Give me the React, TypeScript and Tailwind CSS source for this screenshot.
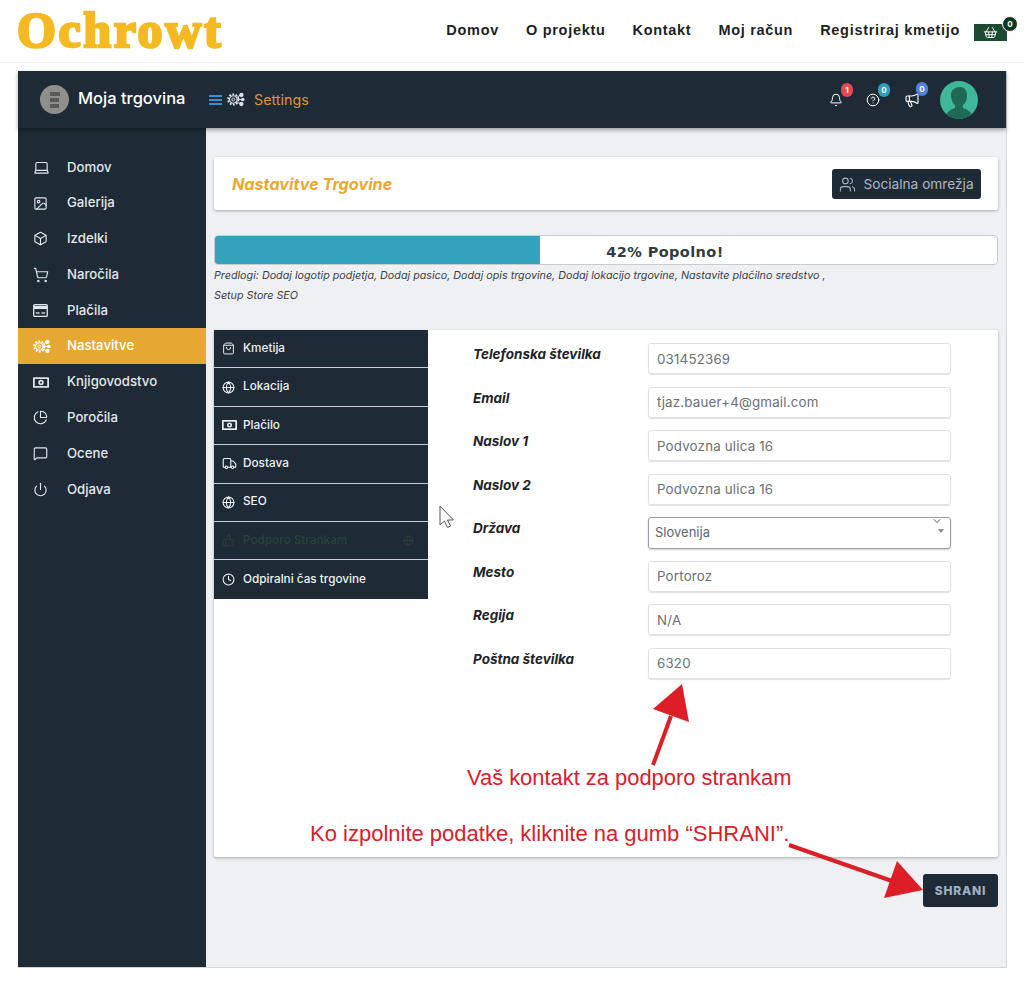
import React from "react";
import {
  Laptop,
  Image,
  Box,
  ShoppingCart,
  ShoppingBasket,
  ChartPie,
  MessageSquare,
  Power,
  ShoppingBag,
  Globe,
  Truck,
  ThumbsUp,
  Clock,
  Bell,
  CircleHelp,
  Megaphone,
  Users,
  ChevronDown,
} from "lucide-react";

const Gears = ({ className }: { className?: string }) => (
  <svg viewBox="0 0 20 16" className={className} fill="none" stroke="currentColor">
    <circle cx="7" cy="8" r="5.8" strokeWidth="2" strokeDasharray="2 1.65" />
    <circle cx="7" cy="8" r="4.2" strokeWidth="1.2" />
    <circle cx="7" cy="8" r="1.6" strokeWidth="1.1" />
    <path d="M11 5.5 15 3M11.5 8H16M11 10.5l4 2.5" strokeWidth="1.1" />
    <circle cx="16" cy="3" r="2.4" fill="currentColor" stroke="none" />
    <circle cx="17.5" cy="8" r="2" fill="currentColor" stroke="none" />
    <circle cx="16" cy="13" r="2.4" fill="currentColor" stroke="none" />
  </svg>
);

const Money = ({ className }: { className?: string }) => (
  <svg viewBox="0 0 18 12" className={className}>
    <rect x="0" y="0" width="18" height="12" rx="1" fill="currentColor" />
    <rect x="2" y="2" width="14" height="8" fill="#1e2a36" />
    <circle cx="9" cy="6" r="3" fill="currentColor" />
    <circle cx="9" cy="6" r="1.2" fill="#1e2a36" />
  </svg>
);

const Card = ({ className }: { className?: string }) => (
  <svg viewBox="0 0 16 14" className={className}>
    <rect x="0.7" y="0.7" width="14.6" height="12.6" rx="1" fill="none" stroke="currentColor" strokeWidth="1.4" />
    <rect x="1" y="2" width="14" height="3.4" fill="currentColor" />
    <rect x="3" y="9" width="4" height="1.4" fill="currentColor" />
    <rect x="9" y="9" width="4" height="1.4" fill="currentColor" />
  </svg>
);

const navs = ["Domov", "O projektu", "Kontakt", "Moj račun", "Registriraj kmetijo"];

const sideItems = [
  { id: 1, label: "Domov", icon: <Laptop size={17} strokeWidth={1.6} /> },
  { id: 2, label: "Galerija", icon: <Image size={15} strokeWidth={1.8} /> },
  { id: 3, label: "Izdelki", icon: <Box size={15} strokeWidth={1.8} /> },
  { id: 4, label: "Naročila", icon: <ShoppingCart size={16} strokeWidth={1.7} /> },
  { id: 5, label: "Plačila", icon: <Card className="w-[15px] h-[13px]" /> },
  { id: 6, label: "Nastavitve", icon: <Gears className="w-[18px] h-[15px]" />, active: true },
  { id: 7, label: "Knjigovodstvo", icon: <Money className="w-[16px] h-[11px]" /> },
  { id: 8, label: "Poročila", icon: <ChartPie size={15} strokeWidth={1.8} /> },
  { id: 9, label: "Ocene", icon: <MessageSquare size={15} strokeWidth={1.8} /> },
  { id: 10, label: "Odjava", icon: <Power size={15} strokeWidth={1.8} /> },
];

const tabs = [
  { id: 1, label: "Kmetija", icon: <ShoppingBag size={13} strokeWidth={1.8} /> },
  { id: 2, label: "Lokacija", icon: <Globe size={13} strokeWidth={2} /> },
  { id: 3, label: "Plačilo", icon: <Money className="w-[15px] h-[10px]" /> },
  { id: 4, label: "Dostava", icon: <Truck size={15} strokeWidth={1.8} /> },
  { id: 5, label: "SEO", icon: <Globe size={13} strokeWidth={2} /> },
  { id: 6, label: "Podporo Strankam", icon: <ThumbsUp size={13} strokeWidth={1.8} />, dim: true },
  { id: 7, label: "Odpiralni čas trgovine", icon: <Clock size={13} strokeWidth={2} /> },
];

const fields = [
  { id: 1, label: "Telefonska številka", value: "031452369" },
  { id: 2, label: "Email", value: "tjaz.bauer+4@gmail.com" },
  { id: 3, label: "Naslov 1", value: "Podvozna ulica 16" },
  { id: 4, label: "Naslov 2", value: "Podvozna ulica 16" },
  { id: 5, label: "Država", value: "Slovenija", select: true },
  { id: 6, label: "Mesto", value: "Portoroz" },
  { id: 7, label: "Regija", value: "N/A" },
  { id: 8, label: "Poštna številka", value: "6320" },
];

const Badge = ({ value, color }: { value: string; color: string }) => (
  <span
    className={`absolute -top-[10px] left-[12px] h-[14px] w-[12px] rounded-full flex items-center justify-center text-[8px] font-bold text-white ${color}`}
  >
    {value}
  </span>
);

const App = () => {
  return (
    <div className="relative w-[1024px] h-[986px] bg-white font-['Inter',sans-serif] overflow-hidden">
      <header className="h-[63px] border-b border-[#f0f0f0] flex items-center justify-between pl-[17px] pr-[17px]">
        <div className="font-['Liberation_Serif',serif] font-bold text-[50px] leading-none text-[#f5b921] tracking-[2.6px] [-webkit-text-stroke:2.6px_#f5b921] -mt-[3px]">
          Ochrowt
        </div>
        <div className="flex items-center">
          <ul className="flex gap-[27px] font-['Liberation_Sans',sans-serif] font-bold text-[14.5px] tracking-[0.7px] text-[#1f1f1f]">
            {navs.map((n) => (
              <li key={n}>{n}</li>
            ))}
          </ul>
          <div className="relative ml-[14px] w-[33px] h-[17px] mt-[2px] bg-[#1d4a33] flex items-center justify-center text-white">
            <ShoppingBasket size={15} strokeWidth={1.5} />
            <span className="absolute -top-[8px] -right-[11px] w-[16px] h-[16px] rounded-full bg-[#123524] border border-white text-[8px] font-bold flex items-center justify-center">
              0
            </span>
          </div>
        </div>
      </header>

      <div className="mx-[18px] mt-[8px] w-[989px] h-[897px] border-r border-b border-[#d4d6da] flex flex-col">
        <div className="h-[57px] shrink-0 bg-[#1e2a36] shadow-[0_2px_4px_rgba(0,0,0,0.35)] z-10 flex items-center pl-[22px] pr-[28px]">
          <div className="w-[29px] h-[29px] shrink-0 rounded-full bg-[#8f8f8c] flex flex-col items-center justify-center gap-[2px]">
            <span className="w-[10px] h-[4px] bg-[#5a5a58]" />
            <span className="w-[9px] h-[4px] bg-[#5a5a58]" />
            <span className="w-[9px] h-[4px] bg-[#5a5a58]" />
          </div>
          <span className="ml-[9px] text-[16.5px] font-medium text-white w-[122px] whitespace-nowrap -mt-[3px]">
            Moja trgovina
          </span>
          <div className="ml-[9px] w-[13px] flex flex-col gap-[2px]">
            <span className="h-[2px] bg-[#3a8fd0]" />
            <span className="h-[2px] bg-[#3a8fd0]" />
            <span className="h-[2px] bg-[#3a8fd0]" />
          </div>
          <Gears className="ml-[5px] w-[18px] h-[15px] text-[#dfe3e8]" />
          <span className="ml-[9px] text-[14.3px] text-[#d8963a]">Settings</span>
          <div className="ml-auto flex items-center text-white">
            <div className="relative">
              <Bell size={14} strokeWidth={1.7} />
              <Badge value="1" color="bg-[#e5484d]" />
            </div>
            <div className="relative ml-[23px]">
              <CircleHelp size={14} strokeWidth={1.7} />
              <Badge value="0" color="bg-[#2f9fc0]" />
            </div>
            <div className="relative ml-[24px]">
              <Megaphone size={16} strokeWidth={1.7} />
              <Badge value="0" color="bg-[#4f82d8]" />
            </div>
            <div className="relative ml-[20px] w-[38px] h-[38px] rounded-full bg-[#3fb89a] overflow-hidden">
              <svg viewBox="0 0 38 38" className="w-full h-full">
                <path
                  d="M5 38c1-8 7-10 10-11v-3c-3-2-4-6-4-10 0-5 4-8 9-8 4 0 7 3 7 8 0 4-1 8-4 10v3c3 1 9 3 10 11z"
                  fill="#1f6a55"
                />
              </svg>
            </div>
          </div>
        </div>

        <div className="flex flex-1 min-h-0">
          <aside className="w-[188px] shrink-0 bg-[#1e2a36] pt-[21px]">
            {sideItems.map(({ id, label, icon, active }) => (
              <div
                key={id}
                className={`h-[35.8px] pt-[1px] flex items-center text-[13.2px] font-medium ${
                  active ? "bg-[#e5a832] text-white" : "text-[#e4e7ea]"
                }`}
              >
                <span className="w-[49px] pl-[15px] flex items-center">{icon}</span>
                {label}
              </div>
            ))}
          </aside>

          <main className="flex-1 bg-[#eef0f4] px-[8px] pt-[29px]">
            <div className="h-[53px] bg-white rounded-[2px] shadow-[0_1px_3px_rgba(0,0,0,0.3)] flex items-center justify-between pl-[18px] pr-[17px]">
              <h1 className="pt-[1px] text-[16.2px] font-bold italic text-[#eaa833]">Nastavitve Trgovine</h1>
              <button className="h-[30px] w-[149px] rounded-[3px] bg-[#1e2a36] text-[#aeb6c0] text-[13.7px] flex items-center justify-center gap-[7px] mt-[1px] whitespace-nowrap">
                <Users size={17} strokeWidth={1.5} />
                Socialna omrežja
              </button>
            </div>

            <div className="relative mt-[25px] h-[30px] bg-white rounded-[4px] border border-[#c9cbd0] overflow-hidden">
              <div className="h-full w-[41.6%] bg-[#35a2bb]" />
              <span className="absolute inset-0 flex items-center justify-center pl-[118px] pt-[6px] text-[14.5px] font-bold tracking-[0.4px] text-[#333a40] font-['DejaVu_Sans',sans-serif]">
                42% Popolno!
              </span>
            </div>
            <p className="mt-[1px] text-[10.75px] leading-[20px] italic text-[#3b3f45] whitespace-nowrap">
              Predlogi: Dodaj logotip podjetja, Dodaj pasico, Dodaj opis trgovine, Dodaj lokacijo
              trgovine, Nastavite plačilno sredstvo ,
              <br />
              Setup Store SEO
            </p>

            <div className="relative mt-[24px] h-[527px] bg-white rounded-[2px] shadow-[0_1px_3px_rgba(0,0,0,0.3)] flex items-start">
              <div className="w-[214px] shrink-0 bg-[#1e2a36]">
                {tabs.map(({ id, label, icon, dim }) => (
                  <div
                    key={id}
                    className={`h-[38.4px] flex items-center pl-[8px] text-[11.75px] font-medium border-b border-[#c9ced3] last:border-b-0 ${
                      dim ? "text-[#2b4238]" : "text-[#eef0f2]"
                    }`}
                  >
                    <span className="w-[21px] flex items-center">{icon}</span>
                    {label}
                    {dim && <Globe size={11} strokeWidth={2} className="ml-auto mr-[14px]" />}
                  </div>
                ))}
              </div>

              <div className="ml-[45px] pt-[13px] flex flex-col gap-[12.5px]">
                {fields.map(({ id, label, value, select }) => (
                  <div key={id} className="flex h-[31px]">
                    <label className="w-[175px] text-[13.5px] font-bold italic text-[#1f2428] pt-[1px] whitespace-nowrap">
                      {label}
                    </label>
                    {select ? (
                      <div className="relative w-[303px] h-[32px] rounded-[3px] border border-[#9c9fa3] shadow-[0_1px_2px_rgba(0,0,0,0.2)] flex items-center pl-[6px] text-[13px] text-[#5c6670]">
                        Slovenija
                        <ChevronDown size={12} className="absolute -top-[3px] right-[7px] text-[#555]" />
                        <span className="absolute top-[11px] right-[6px] border-x-[3px] border-t-[4px] border-x-transparent border-t-[#8a8a8a]" />
                      </div>
                    ) : (
                      <input
                        readOnly
                        value={value}
                        className="w-[303px] h-[31px] rounded-[3px] border border-[#dfe1e4] shadow-[0_1px_1px_rgba(0,0,0,0.12)] pl-[8px] text-[13.3px] text-[#6c6f73] tracking-[0.2px] outline-none"
                      />
                    )}
                  </div>
                ))}
              </div>

              <p className="absolute left-[253px] top-[437px] font-['Liberation_Sans',sans-serif] text-[21.9px] leading-none text-[#d8202a] whitespace-nowrap">
                Vaš kontakt za podporo strankam
              </p>
              <p className="absolute left-[96px] top-[493px] font-['Liberation_Sans',sans-serif] text-[22px] leading-none text-[#d8202a] whitespace-nowrap">
                Ko izpolnite podatke, kliknite na gumb “SHRANI”.
              </p>
            </div>

            <div className="mt-[17px] flex justify-end">
              <button className="w-[75px] h-[33px] rounded-[3px] bg-[#1e2a36] text-[#9fb0c4] text-[12px] font-extrabold tracking-[0.8px]">
                SHRANI
              </button>
            </div>
          </main>
        </div>
      </div>

      {/* annotations sitting over the page */}
      <svg className="absolute left-0 top-0 pointer-events-none" width="1024" height="986">
        <path d="M653 765 671 716" stroke="#dc1f26" strokeWidth="4" />
        <polygon points="682,684 653,709 689,722" fill="#dc1f26" />
        <path d="M789 845 892 881" stroke="#dc1f26" strokeWidth="4" />
        <polygon points="923,890 897,861 884,898" fill="#dc1f26" />
        <path
          d="M440 506v19l4.5-4 3 6.5 3-1.5-3-6h6z"
          fill="#fff"
          stroke="#555"
          strokeWidth="1"
          strokeLinejoin="round"
        />
      </svg>
    </div>
  );
};

export default App;
